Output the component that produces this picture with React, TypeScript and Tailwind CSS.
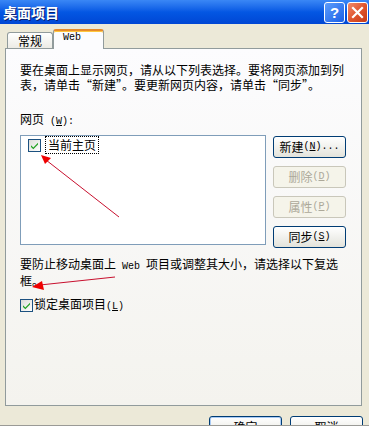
import React from "react";

const cjk = { fontFamily: '"Noto Sans CJK SC", "Noto Sans", sans-serif' };
const mono = { fontFamily: '"Liberation Mono", "DejaVu Sans Mono", monospace' };

function Check() {
  return (
    <div className="w-[13px] h-[13px] border border-[#1C5180] bg-gradient-to-br from-[#DCDCD7] to-[#FFFFFF] flex items-center justify-center shrink-0">
      <svg width="11" height="11" viewBox="0 0 11 11">
        <path d="M2 5.2 L4.3 7.5 L9 2.8 L9 4.6 L4.3 9.3 L2 7 Z" fill="#21A121" />
      </svg>
    </div>
  );
}

function Btn({ children, disabled, def }: { children: React.ReactNode; disabled?: boolean; def?: boolean }) {
  return (
    <div
      className={
        "w-[73px] h-[22px] rounded-[3px] border flex items-center justify-center text-[12px] leading-none shrink-0 " +
        (disabled
          ? "border-[#C9C7BA] bg-[#F5F4EA] text-[#ACA899]"
          : def
          ? "border-[#003C74] bg-gradient-to-b from-[#FFFFFF] to-[#E3E3DB] text-black shadow-[inset_0_0_0_1px_#A9CBF5]"
          : "border-[#003C74] bg-gradient-to-b from-[#FFFFFF] to-[#E3E3DB] text-black")
      }
    >
      {children}
    </div>
  );
}

export default function App() {
  return (
    <div className="w-[369px] h-[426px] bg-[#ECE9D8] flex flex-col overflow-hidden relative" style={cjk}>
      {/* Title bar */}
      <div className="h-[24px] shrink-0 bg-gradient-to-b from-[#3A87F5] via-[#0457E3] to-[#0046D4] flex items-center justify-between pl-[3px] pr-[1px]">
        <span className="text-white font-bold text-[14px] leading-none [text-shadow:1px_1px_0_#0A1E6E]">桌面项目</span>
        <div className="flex gap-[2px] items-center">
          <div className="w-[21px] h-[21px] rounded-[3px] border border-white bg-gradient-to-br from-[#5C9CFB] to-[#1A5EE6] flex items-center justify-center">
            <span className="text-white font-bold text-[15px] leading-none" style={{ fontFamily: '"Liberation Sans", sans-serif' }}>?</span>
          </div>
          <div className="w-[21px] h-[21px] rounded-[3px] border border-white bg-gradient-to-br from-[#F08A6A] via-[#E0552E] to-[#C63A16] flex items-center justify-center">
            <svg width="13" height="13" viewBox="0 0 13 13">
              <path d="M2 2 L11 11 M11 2 L2 11" stroke="white" strokeWidth="2.2" strokeLinecap="square" />
            </svg>
          </div>
        </div>
      </div>

      {/* Tabs */}
      <div className="flex items-end pl-[7px] mt-[5px] h-[20px] relative z-10 -mb-px shrink-0">
        <div className="w-[46px] h-[16px] border border-b-0 border-[#919B9C] rounded-t-[3px] bg-gradient-to-b from-[#FFFFFF] to-[#ECEBE5] flex items-center justify-center text-[12px] leading-none mb-px">
          常规
        </div>
        <div className="w-[51px] h-[20px] border border-b-0 border-[#919B9C] border-t-[#E68B2C] border-t-2 rounded-t-[3px] bg-[#FCFCFE] flex items-start pl-[9px] pt-[2px] text-[10px] leading-none shadow-[inset_0_1px_0_#FFC73C]" style={mono}>
          Web
        </div>
      </div>

      {/* Panel */}
      <div className="ml-[5px] mr-[7px] h-[358px] shrink-0 border border-[#919B9C] bg-gradient-to-b from-[#FCFCFE] to-[#F4F3EE] pl-[14px] pt-[13px] text-[12px] leading-[14px] text-black">
        <div className="leading-[15px]">
          <div className="whitespace-nowrap">要在桌面上显示网页，请从以下列表选择。要将网页添加到列</div>
          <div className="whitespace-nowrap">表，请单击“新建”。要更新网页内容，请单击“同步”。</div>
        </div>

        <div className="mt-[20px] whitespace-nowrap">
          网页<span style={mono} className="text-[10px]"> (<u>W</u>):</span>
        </div>

        <div className="mt-[6px] flex gap-[7px]">
          <div className="w-[246px] h-[110px] border border-[#7F9DB9] bg-white pl-[7px]">
            <div className="flex items-center gap-[4px] h-[18px]">
              <Check />
              <div className="h-[18px] px-[2px] border border-dotted border-black flex items-center">当前主页</div>
            </div>
          </div>
          <div className="flex flex-col gap-[8px] mt-[1px]">
            <Btn>
              新建<span style={mono} className="text-[10px]">(<u>N</u>)...</span>
            </Btn>
            <Btn disabled>
              删除<span style={mono} className="text-[10px]">(<u>D</u>)</span>
            </Btn>
            <Btn disabled>
              属性<span style={mono} className="text-[10px]">(<u>P</u>)</span>
            </Btn>
            <Btn>
              同步<span style={mono} className="text-[10px]">(<u>S</u>)</span>
            </Btn>
          </div>
        </div>

        <div className="mt-[9px] whitespace-nowrap">
          要防止移动桌面上<span style={mono} className="text-[10px]"> Web </span>项目或调整其大小，请选择以下复选
        </div>
        <div className="whitespace-nowrap">框。</div>

        <div className="mt-[9px] flex items-center gap-[1px] h-[16px]">
          <Check />
          <span className="whitespace-nowrap">
            锁定桌面项目<span style={mono} className="text-[10px]">(<u>L</u>)</span>
          </span>
        </div>
      </div>

      {/* Bottom buttons (cropped) */}
      <div className="mt-[10px] h-[9px] overflow-hidden flex justify-end gap-[8px] pr-[6px] shrink-0">
        <Btn def>确定</Btn>
        <Btn>取消</Btn>
      </div>
      <div className="h-px bg-[#9A9A96] shrink-0" />

      {/* Red annotation arrows */}
      <svg className="absolute left-0 top-0 pointer-events-none" width="369" height="426" viewBox="0 0 369 426">
        <line x1="119" y1="217" x2="46" y2="160" stroke="#C8102E" strokeWidth="1" />
        <polygon points="41,155 51,158 45,164" fill="#F00000" />
        <line x1="115" y1="277" x2="40" y2="285" stroke="#C8102E" strokeWidth="1" />
        <polygon points="32,287 42,281 44,290" fill="#F00000" />
      </svg>
    </div>
  );
}
